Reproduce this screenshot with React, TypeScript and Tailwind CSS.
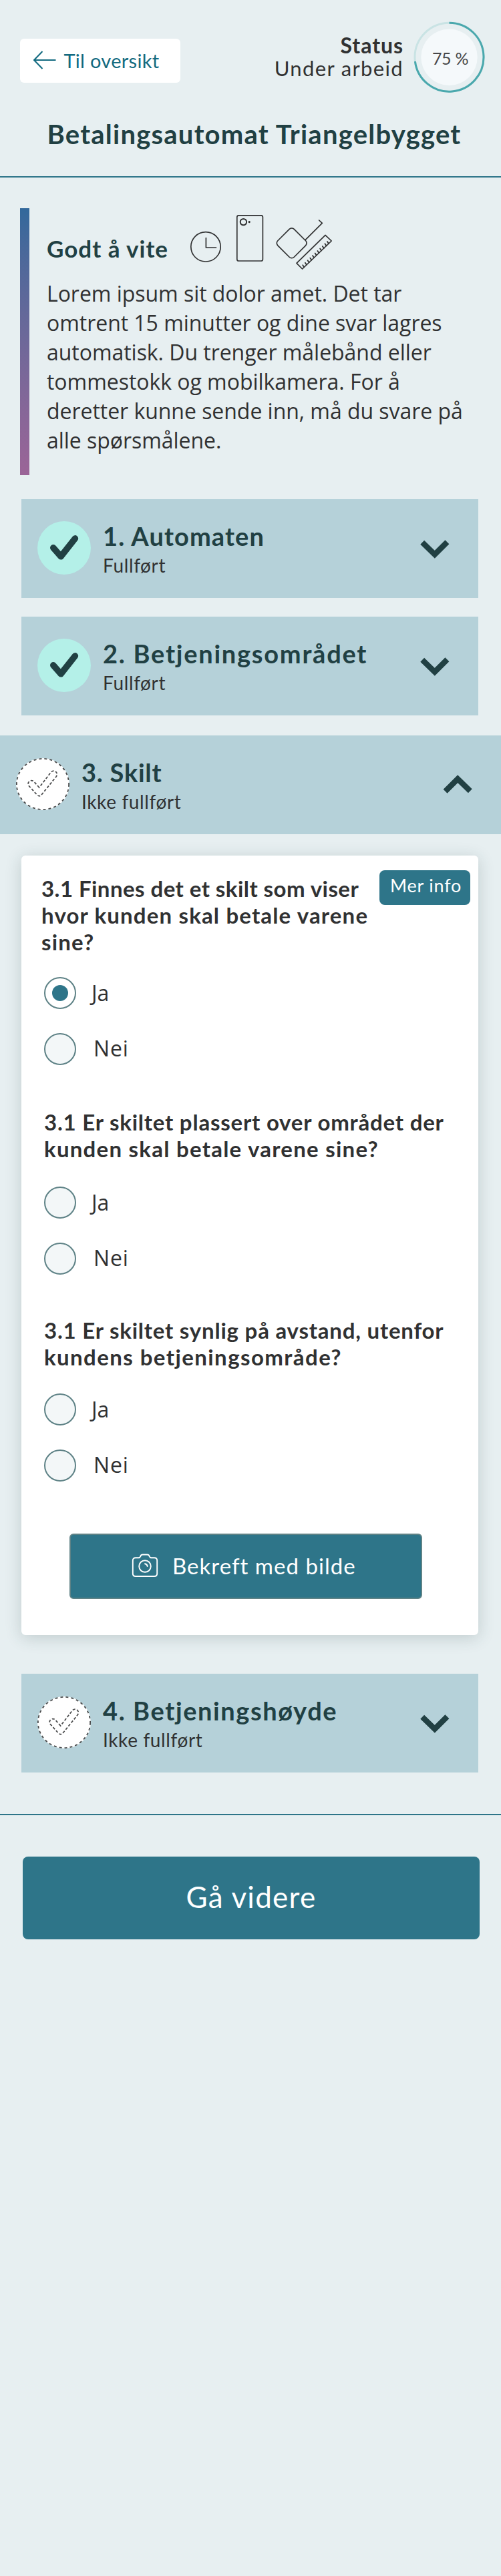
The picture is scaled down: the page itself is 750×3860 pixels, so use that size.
import React, { type ReactNode } from "react";

const HEAD = "font-['Lato',sans-serif]";
const BODY = "font-['Open_Sans',sans-serif]";

function ProgressRing() {
  return (
    <div className="relative mt-[32px] h-[108px] w-[108px]">
      <svg className="block" width="108" height="108" viewBox="0 0 108 108" fill="none">
        <circle cx="53.5" cy="53.7" r="42.2" fill="#f5f9fb" />
        <circle cx="53.5" cy="53.7" r="51.5" stroke="#c9e3e4" strokeWidth="3" />
        <path d="M53.5 2.2 A51.5 51.5 0 1 1 2.4 60" stroke="#4aa8ad" strokeWidth="3" />
      </svg>
      <span className={`absolute inset-0 flex items-center justify-center pt-[4px] pl-[2px] text-[25px] tracking-[-0.3px] whitespace-nowrap text-[#474849] ${HEAD}`}>
        75 %
      </span>
    </div>
  );
}

function DoneBadge() {
  return (
    <svg className="block shrink-0" width="80" height="80" viewBox="0 0 80 80" fill="none">
      <circle cx="40" cy="40" r="40" fill="#b4f0e8" />
      <path d="M23.8 39.8 L35.2 52.8 L56.4 25.9" stroke="#214043" strokeWidth="9.6" strokeLinecap="round" strokeLinejoin="round" />
    </svg>
  );
}

function PendingBadge() {
  return (
    <svg className="block shrink-0" width="80" height="80" viewBox="0 0 80 80" fill="none">
      <ellipse cx="40" cy="39" rx="40" ry="39" fill="#fff" />
      <ellipse cx="40" cy="39" rx="39.1" ry="38.1" stroke="#4b4c4d" strokeWidth="1.8" strokeDasharray="4 4" />
      <path
        d="M34.7 44 L27 35.3 C22.5 31 16 35.5 19 41.3 L31 54.5 C33.5 57.5 36.5 57.5 38.5 54.5 L60.3 27.5 C64 21 56.5 16 52 21.5 Z"
        stroke="#4b4c4d"
        strokeWidth="1.8"
        strokeDasharray="4 2.6"
      />
    </svg>
  );
}

function Chevron({ up = false }: { up?: boolean }) {
  return (
    <svg className={up ? "block rotate-180" : "block"} width="46" height="30" viewBox="0 0 46 30" fill="none">
      <path d="M4.2 4.8 L22.8 22.8 L41.4 4.2" stroke="#214043" strokeWidth="8.4" />
    </svg>
  );
}

type SectionProps = { title: string; titleClass: string; done?: boolean; open?: boolean; className: string };

function Section({ title, titleClass, done = false, open = false, className }: SectionProps) {
  return (
    <button type="button" className={`flex h-[148px] items-start pr-[42px] pl-6 text-left ${className}`}>
      <div className={done ? "pt-[33px]" : "pt-[34px]"}>{done ? <DoneBadge /> : <PendingBadge />}</div>
      <div className={`flex flex-col pt-[33px] pl-[18px] whitespace-nowrap ${HEAD}`}>
        <span className={`h-[44px] text-[38px] leading-[44px] font-bold text-[#214043] ${titleClass}`}>{title}</span>
        <span className="mt-[5px] h-[34px] text-[28px] leading-[34px] tracking-[0.63px] text-[#303132]">
          {done ? "Fullført" : "Ikke fullført"}
        </span>
      </div>
      <div className={open ? "ml-auto pt-[58px]" : "ml-auto pt-[60px]"}>
        <Chevron up={open} />
      </div>
    </button>
  );
}

function Option({ label, checked = false }: { label: string; checked?: boolean }) {
  return (
    <label className="flex h-[48px] items-center">
      <span className={`flex h-[48px] w-[48px] items-center justify-center rounded-full border-2 border-[#5e8286] ${checked ? "bg-white" : "bg-[#f3f7f8]"}`}>
        {checked && <span className="h-[24px] w-[24px] rounded-full bg-[#2e7589]" />}
      </span>
      <span className={`text-[32px] leading-[44px] text-[#303132] ${BODY} ${label === "Nei" ? "pb-[3px] pl-[26px] tracking-[0.9px]" : "pl-[23px]"}`}>
        {label}
      </span>
    </label>
  );
}

function Options({ selected, className }: { selected?: string; className: string }) {
  return (
    <div className={`flex flex-col gap-[36px] pl-[34px] ${className}`}>
      <Option label="Ja" checked={selected === "Ja"} />
      <Option label="Nei" checked={selected === "Nei"} />
    </div>
  );
}

function Line({ children, className }: { children: ReactNode; className: string }) {
  return <span className={`block ${className}`}>{children}</span>;
}

const QUESTION = `text-[33px] leading-[40px] font-bold whitespace-nowrap text-[#303132] ${HEAD}`;

function InfoIcons() {
  return (
    <svg className="block" width="225" height="90" viewBox="280 318 225 90" fill="none" stroke="#303132" strokeWidth="1.7" strokeLinejoin="round" strokeLinecap="round">
      <circle cx="308" cy="369.8" r="22.2" />
      <path d="M308.4 356.5 V371 H323.5" />
      <rect x="354.8" y="322.8" width="38.6" height="68.2" rx="2.5" />
      <circle cx="364.4" cy="332.6" r="4.7" strokeWidth="2" />
      <circle cx="373.2" cy="332.6" r="1.6" fill="#303132" stroke="none" />
      <rect x="419.4" y="347" width="34.6" height="34.6" rx="5" transform="rotate(45 436.7 364.3)" />
      <path d="M457 359.6 L482.3 334.4 L477.6 330" />
      <path d="M487 352.4 L496.2 361 L452.6 403 L444 394.4 Z" />
      <path d="M455.2 400.2 l-2 -3 M458.9 396.7 l-2 -3 M462.6 393.2 l-2 -3 M466.3 389.6 l-2 -3 M470 386.1 l-2 -3 M473.7 382.5 l-2 -3 M477.4 379 l-2 -3 M481.1 375.4 l-2 -3 M484.8 371.9 l-2 -3 M488.5 368.3 l-2 -3 M492 365 l-2 -3" strokeWidth="1.8" />
    </svg>
  );
}

export default function App() {
  return (
    <div className="min-h-[3860px] w-[750px] bg-[#e7eff1]">
      <header className="h-[266px] border-b-2 border-[#2e7589]">
        <div className="flex h-[140px] items-start pr-[23px] pl-[30px]">
          <button type="button" className={`mt-[58px] flex h-[66px] w-[240px] items-center rounded-[6px] bg-white pl-[20px] text-[29px] tracking-[0.3px] text-[#126a80] ${HEAD}`}>
            <svg className="-mt-[2px] mr-[11.5px] block" width="34" height="28" viewBox="0 0 34 28" fill="none" stroke="#126a80" strokeWidth="2">
              <path d="M33.5 14 H1.5 M13.5 1 L1 14 L13.5 27" />
            </svg>
            Til oversikt
          </button>
          <div className={`mt-[51px] mr-[15px] ml-auto flex flex-col items-end text-[#303132] ${HEAD}`}>
            <span className="text-[32px] leading-[34px] font-bold tracking-[0.95px]">Status</span>
            <span className="text-[31px] leading-[34px] tracking-[1.35px]">Under arbeid</span>
          </div>
          <ProgressRing />
        </div>
        <h1 className={`mt-[37px] pl-[70.5px] text-[40px] leading-[48px] font-bold tracking-[1.23px] whitespace-nowrap text-[#214043] ${HEAD}`}>
          Betalingsautomat Triangelbygget
        </h1>
      </header>

      <main>
        <section className="mt-[46px] ml-[30px] flex h-[400px]">
          <div className="w-[14px] bg-linear-to-b from-[#32689b] to-[#9b6497]" />
          <div className="pt-[6px] pl-[26px]">
            <div className="flex h-[90px]">
              <h2 className={`w-[210px] pt-[34px] text-[35px] leading-[40px] font-bold tracking-[1px] whitespace-nowrap text-[#214043] ${HEAD}`}>
                Godt å vite
              </h2>
              <InfoIcons />
            </div>
            <p className={`mt-[10px] text-[32px] leading-[44px] tracking-[-0.04px] whitespace-nowrap text-[#303132] ${BODY}`}>
              Lorem ipsum sit dolor amet. Det tar
              <br />
              omtrent 15 minutter og dine svar lagres
              <br />
              automatisk. Du trenger målebånd eller
              <br />
              tommestokk og mobilkamera. For å
              <br />
              deretter kunne sende inn, må du svare på
              <br />
              alle spørsmålene.
            </p>
          </div>
        </section>

        <div className="mt-[36px] flex flex-col">
          <Section title="1. Automaten" titleClass="tracking-[1.1px]" done className="mx-[32px] w-[684px] bg-[#b5d1d9]" />
          <Section title="2. Betjeningsområdet" titleClass="tracking-[1.75px]" done className="mx-[32px] mt-[28px] w-[684px] bg-[#b5d1d9]" />
          <Section title="3. Skilt" titleClass="tracking-[0.75px]" open className="mt-[30px] w-full bg-[#b5d1d9]" />
        </div>

        <section className="mt-[32px] ml-[32px] h-[1168px] w-[684px] rounded-[6px] bg-white pt-[22px] shadow-[0_4px_24px_rgba(33,64,67,0.2)]">
          <div className="flex items-start justify-between pr-[12px] pl-[30px]">
            <h3 className={`pt-[7px] ${QUESTION}`}>
              <Line className="tracking-[0.45px]">3.1 Finnes det et skilt som viser</Line>
              <Line className="tracking-[1.16px]">hvor kunden skal betale varene</Line>
              <Line className="tracking-[1.16px]">sine?</Line>
            </h3>
            <button type="button" className={`flex h-[52px] w-[136px] rounded-[8px] bg-[#2e7589] pt-[7px] pl-[16px] text-[27px] leading-[32px] tracking-[0.8px] whitespace-nowrap text-white ${HEAD}`}>
              Mer info
            </button>
          </div>
          <Options selected="Ja" className="mt-[33px]" />
          <h3 className={`mt-[65px] pl-[34px] ${QUESTION}`}>
            <Line className="tracking-[0.79px]">3.1 Er skiltet plassert over området der</Line>
            <Line className="tracking-[1.25px]">kunden skal betale varene sine?</Line>
          </h3>
          <Options className="mt-[37px]" />
          <h3 className={`mt-[63px] pl-[34px] ${QUESTION}`}>
            <Line className="tracking-[0.79px]">3.1 Er skiltet synlig på avstand, utenfor</Line>
            <Line className="tracking-[1.42px]">kundens betjeningsområde?</Line>
          </h3>
          <Options className="mt-[35px]" />
          <button type="button" className={`mt-[78px] ml-[72px] flex h-[98px] w-[528px] rounded-[6px] border-2 border-[#5e8286] bg-[#2e7589] text-white ${HEAD}`}>
            <svg className="mt-[20px] ml-[84px] block" width="60" height="50" viewBox="0 0 60 50" fill="none" stroke="#fff" strokeWidth="1.9" strokeLinejoin="round" strokeLinecap="round">
              <path d="M13 14.3 H17.5 C19 14.3 19.7 13.6 20.2 12.2 C20.9 10.2 21.8 9.5 23.5 9.5 H30.5 C32.2 9.5 33.1 10.2 33.8 12.2 C34.3 13.6 35 14.3 36.5 14.3 H41 C43.8 14.3 45.2 15.8 45.2 18.5 V38 C45.2 40.8 43.8 42 41 42 H13 C10.2 42 8.8 40.8 8.8 38 V18.5 C8.8 15.8 10.2 14.3 13 14.3 Z" />
              <circle cx="27" cy="27" r="8.8" />
              <path d="M27 23.3 C29.2 23.6 30.4 24.8 30.7 27" />
            </svg>
            <span className="mt-[26px] ml-[8px] text-[33px] leading-[40px] tracking-[1.02px] whitespace-nowrap">Bekreft med bilde</span>
          </button>
        </section>

        <Section title="4. Betjeningshøyde" titleClass="tracking-[1.6px]" className="mx-[32px] mt-[58px] w-[684px] bg-[#b5d1d9]" />
      </main>

      <footer className="mt-[62px] border-t-2 border-[#2e7589] pt-[62px] pl-[34px]">
        <button type="button" className={`flex h-[124px] w-[684px] items-center justify-center rounded-[8px] bg-[#2e7589] pb-[5px] text-[44px] leading-[52px] tracking-[1.26px] text-white ${HEAD}`}>
          Gå videre
        </button>
      </footer>
    </div>
  );
}
